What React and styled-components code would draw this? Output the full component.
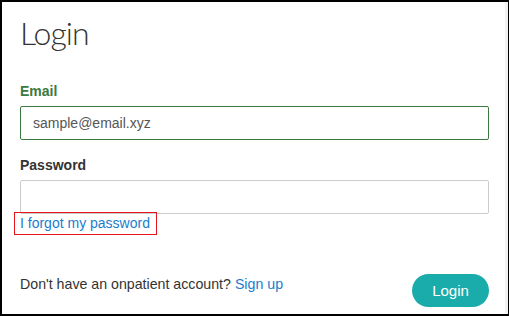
import React from "react";
import styled, { createGlobalStyle } from "styled-components";

const Global = createGlobalStyle`
  html, body { margin: 0; padding: 0; background: #fff; }
  body { font-family: "Liberation Sans", Arial, sans-serif; }
  * { box-sizing: border-box; }
`;

const Frame = styled.div`
  width: 509px;
  height: 316px;
  border-top: 2px solid #000;
  border-left: 2px solid #000;
  border-bottom: 2px solid #000;
  border-right: 1px solid #000;
  display: flex;
  background: #fff;
`;

const Panel = styled.div`
  flex: 1;
  padding: 12px 16px 0 18px;
  display: flex;
  flex-direction: column;
`;

const Gutter = styled.div`
  width: 3px;
  background: #f2f2f2;
`;

const Title = styled.h1`
  margin: 0;
  font-family: Lato, "Liberation Sans", sans-serif;
  font-weight: 300;
  font-size: 32px;
  line-height: 38px;
  color: #333;
  letter-spacing: -1px;
`;

const Label = styled.label`
  display: block;
  font-weight: bold;
  font-size: 14px;
  line-height: 16px;
  color: ${(p) => p.$color || "#333"};
  margin-top: ${(p) => p.$top}px;
  margin-bottom: 7px;
`;

const Input = styled.div`
  height: 34px;
  border: 1px solid ${(p) => p.$border};
  border-radius: 2px;
  padding: 0 12px;
  display: flex;
  align-items: center;
  font-size: 14px;
  color: #555;
`;

const Forgot = styled.a`
  align-self: flex-start;
  margin-left: -6px;
  margin-top: -2px;
  border: 1px solid #e8141b;
  padding: 2px 6px 3px 5px;
  font-size: 14px;
  line-height: 16px;
  color: #1a7dcc;
  text-decoration: none;
`;

const Footer = styled.div`
  margin-top: 39px;
  display: flex;
  align-items: flex-start;
  justify-content: space-between;
`;

const Prompt = styled.span`
  margin-top: 2px;
  font-size: 14.2px;
  line-height: 16px;
  color: #333;
`;

const Link = styled.a`
  color: #1a7dcc;
  text-decoration: none;
`;

const Button = styled.button`
  width: 77px;
  height: 33px;
  border: none;
  border-radius: 17px;
  background: #1aabab;
  color: #fff;
  font-family: "Liberation Sans", Arial, sans-serif;
  font-size: 15px;
  padding: 0;
`;

export default function App() {
  return (
    <>
      <Global />
      <Frame>
        <Panel>
          <Title>Login</Title>
          <Label $color="#3b7a3e" $top={31}>Email</Label>
          <Input $border="#3b7a3e">sample@email.xyz</Input>
          <Label $top={17}>Password</Label>
          <Input $border="#cccccc" />
          <Forgot href="#">I forgot my password</Forgot>
          <Footer>
            <Prompt>
              Don't have an onpatient account? <Link href="#">Sign up</Link>
            </Prompt>
            <Button>Login</Button>
          </Footer>
        </Panel>
        <Gutter />
      </Frame>
    </>
  );
}
